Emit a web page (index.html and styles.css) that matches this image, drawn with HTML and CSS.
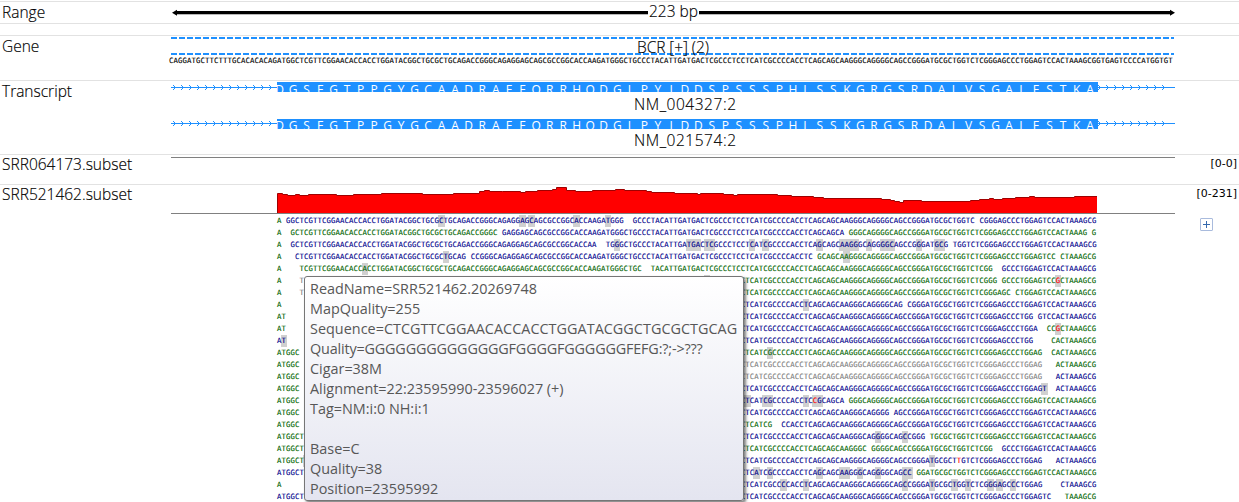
FILE: index.html
```html
<!DOCTYPE html>
<html lang="en">
<head>
<meta charset="utf-8">
<title>BCR alignment view</title>
<link rel="stylesheet" href="styles.css">
</head>
<body>
<main class="browser">
  <section class="track range">
    <h2 class="label">Range</h2>
    <svg class="plot" viewBox="169 2 1007 21" width="1007" height="21">
      <path class="ruler-shade" d="M176 14.5H648M699 14.5H1171"/>
      <path class="ruler" d="M175 12.5H648M699 12.5H1172"/>
      <path d="M172 12.8L177 9.8V15.8ZM1175 12.8L1170 9.8V15.8Z"/>
      <text class="name" x="649" y="17" textLength="49">223 bp</text>
    </svg>
  </section>
  <section class="track gene">
    <h2 class="label">Gene</h2>
    <div class="plot">
      <svg viewBox="169 36 1007 20" width="1007" height="20">
        <path class="dashes" d="M171 38H1174M171 54H1174"/>
        <text class="name" x="637" y="53" textLength="72">BCR [+] (2)</text>
      </svg>
      <div class="bases" id="reference"></div>
    </div>
  </section>
  <section class="track transcript">
    <h2 class="label">Transcript</h2>
    <svg class="plot" viewBox="169 81 1007 73" width="1007" height="73" id="transcripts"></svg>
  </section>
  <section class="track sample-empty">
    <h2 class="label sample">SRR064173.subset</h2>
    <svg class="plot" viewBox="169 155 1007 29" width="1007" height="29"><path class="axis" d="M171 157.5H1175"/></svg>
    <span class="scale">[0-0]</span>
  </section>
  <section class="track sample-reads">
    <h2 class="label sample">SRR521462.subset</h2>
    <div class="plot">
      <svg viewBox="169 185 1007 29" width="1007" height="29" id="coverage"></svg>
      <div class="reads" id="reads"></div>
    </div>
    <div class="side">
      <span class="scale">[0-231]</span>
      <button class="expand" aria-label="Expand"><svg viewBox="0 0 11 11" width="11" height="11"><path d="M2 5.5H9M5.5 2V9"/></svg></button>
    </div>
  </section>
  <aside class="tooltip">
    <p>ReadName=SRR521462.20269748</p>
    <p>MapQuality=255</p>
    <p class="seq">Sequence=CTCGTTCGGAACACCACCTGGATACGGCTGCGCTGCAG</p>
    <p class="qual">Quality=GGGGGGGGGGGGGGFGGGGFGGGGGGFEFG:?;-&gt;???</p>
    <p>Cigar=38M</p>
    <p>Alignment=22:23595990-23596027 (+)</p>
    <p>Tag=NM:i:0 NH:i:1</p>
    <p>&nbsp;</p>
    <p>Base=C</p>
    <p>Quality=38</p>
    <p>Position=23595992</p>
  </aside>
</main>
<script src="tracks.js"></script>
</body>
</html>
```
FILE: styles.css
```css
* { box-sizing: border-box; }
body { margin: 0; background: #fff; color: #000; font-family: "Open Sans", "Noto Sans", sans-serif; }
.browser { position: relative; width: 1239px; height: 502px; padding-top: 1px; overflow: hidden; }
.track { display: grid; grid-template-columns: 169px 1007px 1fr; border-top: 1px solid #e2e2e2; }
.range { height: 23px; border-bottom: 1px solid #e2e2e2; margin-bottom: 11px; }
.gene { height: 45px; }
.transcript { height: 74px; }
.sample-empty { height: 30px; }
.sample-reads { height: 318px; }
.label { margin: 0; padding-left: 2px; font-size: 15.5px; font-weight: 300; line-height: 20px; white-space: nowrap; -webkit-text-stroke: 0.15px #000; }
.sample { line-height: 18px; }
.plot, .plot svg { display: block; overflow: visible; }
.name { font-size: 15.5px; font-weight: 300; stroke: #000; stroke-width: 0.15px; }
.ruler { stroke: #000; stroke-width: 3; }
.ruler-shade { stroke: #b8b8b8; stroke-width: 1; }
.dashes { stroke: #1e90ff; stroke-width: 2; stroke-dasharray: 6 2; }
.axis { stroke: #808080; }
.intron { stroke: #1e90ff; fill: none; }
.exon { fill: #1e90ff; }
.amino { fill: #fff; font-size: 12px; text-anchor: middle; }
.coverage { fill: #f00; }
.coverage-edge { fill: none; stroke: #a00000; }
.bases { height: 12px; font: 7.3px/12px "DejaVu Sans Mono", monospace; letter-spacing: 0.108px; white-space: pre; -webkit-text-stroke: 0.12px currentColor; }
.gene .bases { margin-top: -1px; }
.reads { position: relative; z-index: 0; padding: 1px 0 0 108px; }
.forward { color: #006400; }
.reverse { color: #00008b; }
.unmapped { color: #808080; }
.low { position: relative; display: inline-block; height: 12px; vertical-align: top; }
.low::before { content: ""; position: absolute; z-index: -1; inset: 0 -1px; background: #d0d0d0; }
.mismatch { color: #f00; }
.scale { display: block; justify-self: end; padding: 2px 2px 0 0; font: 11px/14px "DejaVu Sans", sans-serif; text-align: right; }
.side { display: flex; flex-direction: column; align-items: flex-end; }
.expand { display: block; width: 13px; height: 13px; margin: 17px 26px 0 0; padding: 0; border: 1px solid #a9bbdd; border-radius: 1px; background: #fff; }
.expand svg { display: block; }
.expand path { stroke: #3569ad; }
.tooltip { position: absolute; z-index: 1; left: 304px; top: 276px; width: 440px; height: 225px; padding: 2px 5px; border: 1px solid #767676; border-radius: 3px; background: linear-gradient(#fff, #e4e5f0); box-shadow: 2px 2px 3px rgba(0, 0, 0, 0.5); color: #575757; font-size: 14.4px; line-height: 20px; white-space: nowrap; }
.tooltip p { margin: 0; }
.tooltip .seq { letter-spacing: 0.03px; }
.tooltip .qual { letter-spacing: -0.17px; }
```
FILE: tracks.js
```js
const EXON = 'ATGGCTCGTTCGGAACACCACCTGGATACGGCTGCGCTGCAGACCGGGCAGAGGAGCAGCGCCGGCACCAAGATGGGCTGCCCTACATTGATGACTCGCCCTCCTCATCGCCCCACCTCAGCAGCAAGGGCAGGGGCAGCCGGGATGCGCTGGTCTCGGGAGCCCTGGAGTCCACTAAAGCG';
const PROTEIN = 'DGSFGTPPGYGCAADRAEEQRRHQDGLPYIDDSPSSSPHLSSKGRGSRDALVSGALESTKA';
document.getElementById('reference').textContent = 'CAGGATGCTTCTTTGCACACACAG' + EXON + 'GTGAGTCCCCATGGTGT';

function transcript(axis, top, textY, name, nameY, id) {
  let d = `M171 ${axis + .5}H277M1098 ${axis + .5}H1175`;
  const chevron = x => ` M${x - 2} ${axis - 2}l2.5 2.5l-2.5 2.5`;
  for (let x = 175; x < 277; x += 8) d += chevron(x);
  for (let x = 1100; x < 1170; x += 8) d += chevron(x);
  const letters = [...PROTEIN].map((c, i) => `<tspan x="${(279.5 + i * 13.51).toFixed(1)}">${c}</tspan>`).join('');
  return `<clipPath id="${id}"><rect x="277" y="${top}" width="821" height="10"/></clipPath>
    <path class="intron" d="${d}"/><rect class="exon" x="277" y="${top}" width="821" height="10"/>
    <text class="amino" y="${textY}" clip-path="url(#${id})">${letters}</text>
    <text class="name" x="634" y="${nameY}" textLength="102">${name}</text>`;
}
document.getElementById('transcripts').innerHTML =
  transcript(87, 82, 93.5, 'NM_004327:2', 110, 'exon-a') + transcript(123, 119, 130, 'NM_021574:2', 146, 'exon-b');

// Coverage profile: x where each step begins, y of its top.
const steps = [[277,193],[282,194],[287,195],[295,194],[299,195],[308,194],[336,195],[353,194],[381,193],[422,194],[453,193],[479,191],[484,190],[489,191],[502,191],[520,192],[525,191],[537,190],[552,189],[556,187],[566,190],[575,191],[592,190],[615,189],[624,190],[646,191],[651,192],[674,193],[697,194],[700,193],[723,194],[733,195],[737,194],[777,195],[791,196],[813,197],[823,198],[881,199],[890,200],[894,201],[899,202],[903,200],[921,201],[970,200],[979,199],[989,198],[993,199],[1002,198],[1015,197],[1029,196],[1034,197],[1074,196]];
let outline = 'M277.5 213';
steps.forEach(([x, y], i) => { outline += `L${x + .5} ${y + .5}H${i + 1 < steps.length ? steps[i + 1][0] + .5 : 1097}`; });
document.getElementById('coverage').innerHTML =
  `<path class="coverage" d="${outline}V213Z"/><path class="coverage-edge" d="${outline}"/><path class="axis" d="M171 213.5H1175"/>`;

// Each row: aligned blocks [strand, first, last], low quality positions, mismatches.
const rows = [
  ['f0-0 r2-76 r79-154 r156-181', [36,54,56,66,73]],
  ['f0-0 f3-48 r50-125 f127-179 f181-181', []],
  ['f0-0 r3-70 r73-148 r150-181', [75,91,92,93,95,96,105,108,120,125,126,127,128,131,134,135,136,142,146,147]],
  ['f0-0 r4-41 r43-118 f120-172 f174-181', [37,126]],
  ['f0-0 f5-80 f83-158 r161-181', [19]],
  ['f0-0 u5-5 f90-159 f161-181', [95,173], {173:'G'}],
  ['f0-0 u5-5 f100-162 f164-181', []],
  ['f0-0 r100-138 r140-181', [117]],
  ['f0-1 r100-167 r169-181', []],
  ['f0-1 r100-168 f171-181', [173], {173:'G'}],
  ['r0-1 r100-167 f172-181', [1]],
  ['f0-4 f100-169 f172-181', [109]],
  ['f0-4 u100-169 f173-181', []],
  ['f0-4 u100-169 r173-181', []],
  ['f0-4 r100-170 r173-181', [170]],
  ['f0-4 r100-125 f127-181', [104,108,109,117,119,120], {119:'C'}],
  ['f0-4 r100-135 r137-181', []],
  ['f0-4 f100-109 r112-181', []],
  ['f0-5 r100-143 f145-181', [133,139]],
  ['f0-5 f100-130 f132-158 r161-181', []],
  ['f0-6 r100-169 r173-181', [6,145], {151:'T'}],
  ['r0-5 r100-140 f142-181', [106,109,120,125,126,129,133,139,140]],
  ['f0-0 r100-169 r174-181', [112,117,139,145,150,153,158,160,163]],
  ['r0-5 r100-171 f175-181', []]
];
const strand = { f: 'forward', r: 'reverse', u: 'unmapped' };
document.getElementById('reads').innerHTML = rows.map(([blocks, low, mismatch = {}]) => {
  let html = '', at = 0;
  for (const block of blocks.split(' ')) {
    const [first, last] = block.slice(1).split('-').map(Number);
    html += ' '.repeat(first - at) + `<span class="${strand[block[0]]}">`;
    for (let i = first; i <= last; i++) {
      const names = [low.includes(i) ? 'low' : '', mismatch[i] ? 'mismatch' : ''].join(' ').trim();
      const base = mismatch[i] || EXON[i];
      html += names ? `<span class="${names}">${base}</span>` : base;
    }
    html += '</span>';
    at = last + 1;
  }
  return `<div class="bases">${html}</div>`;
}).join('');
```
